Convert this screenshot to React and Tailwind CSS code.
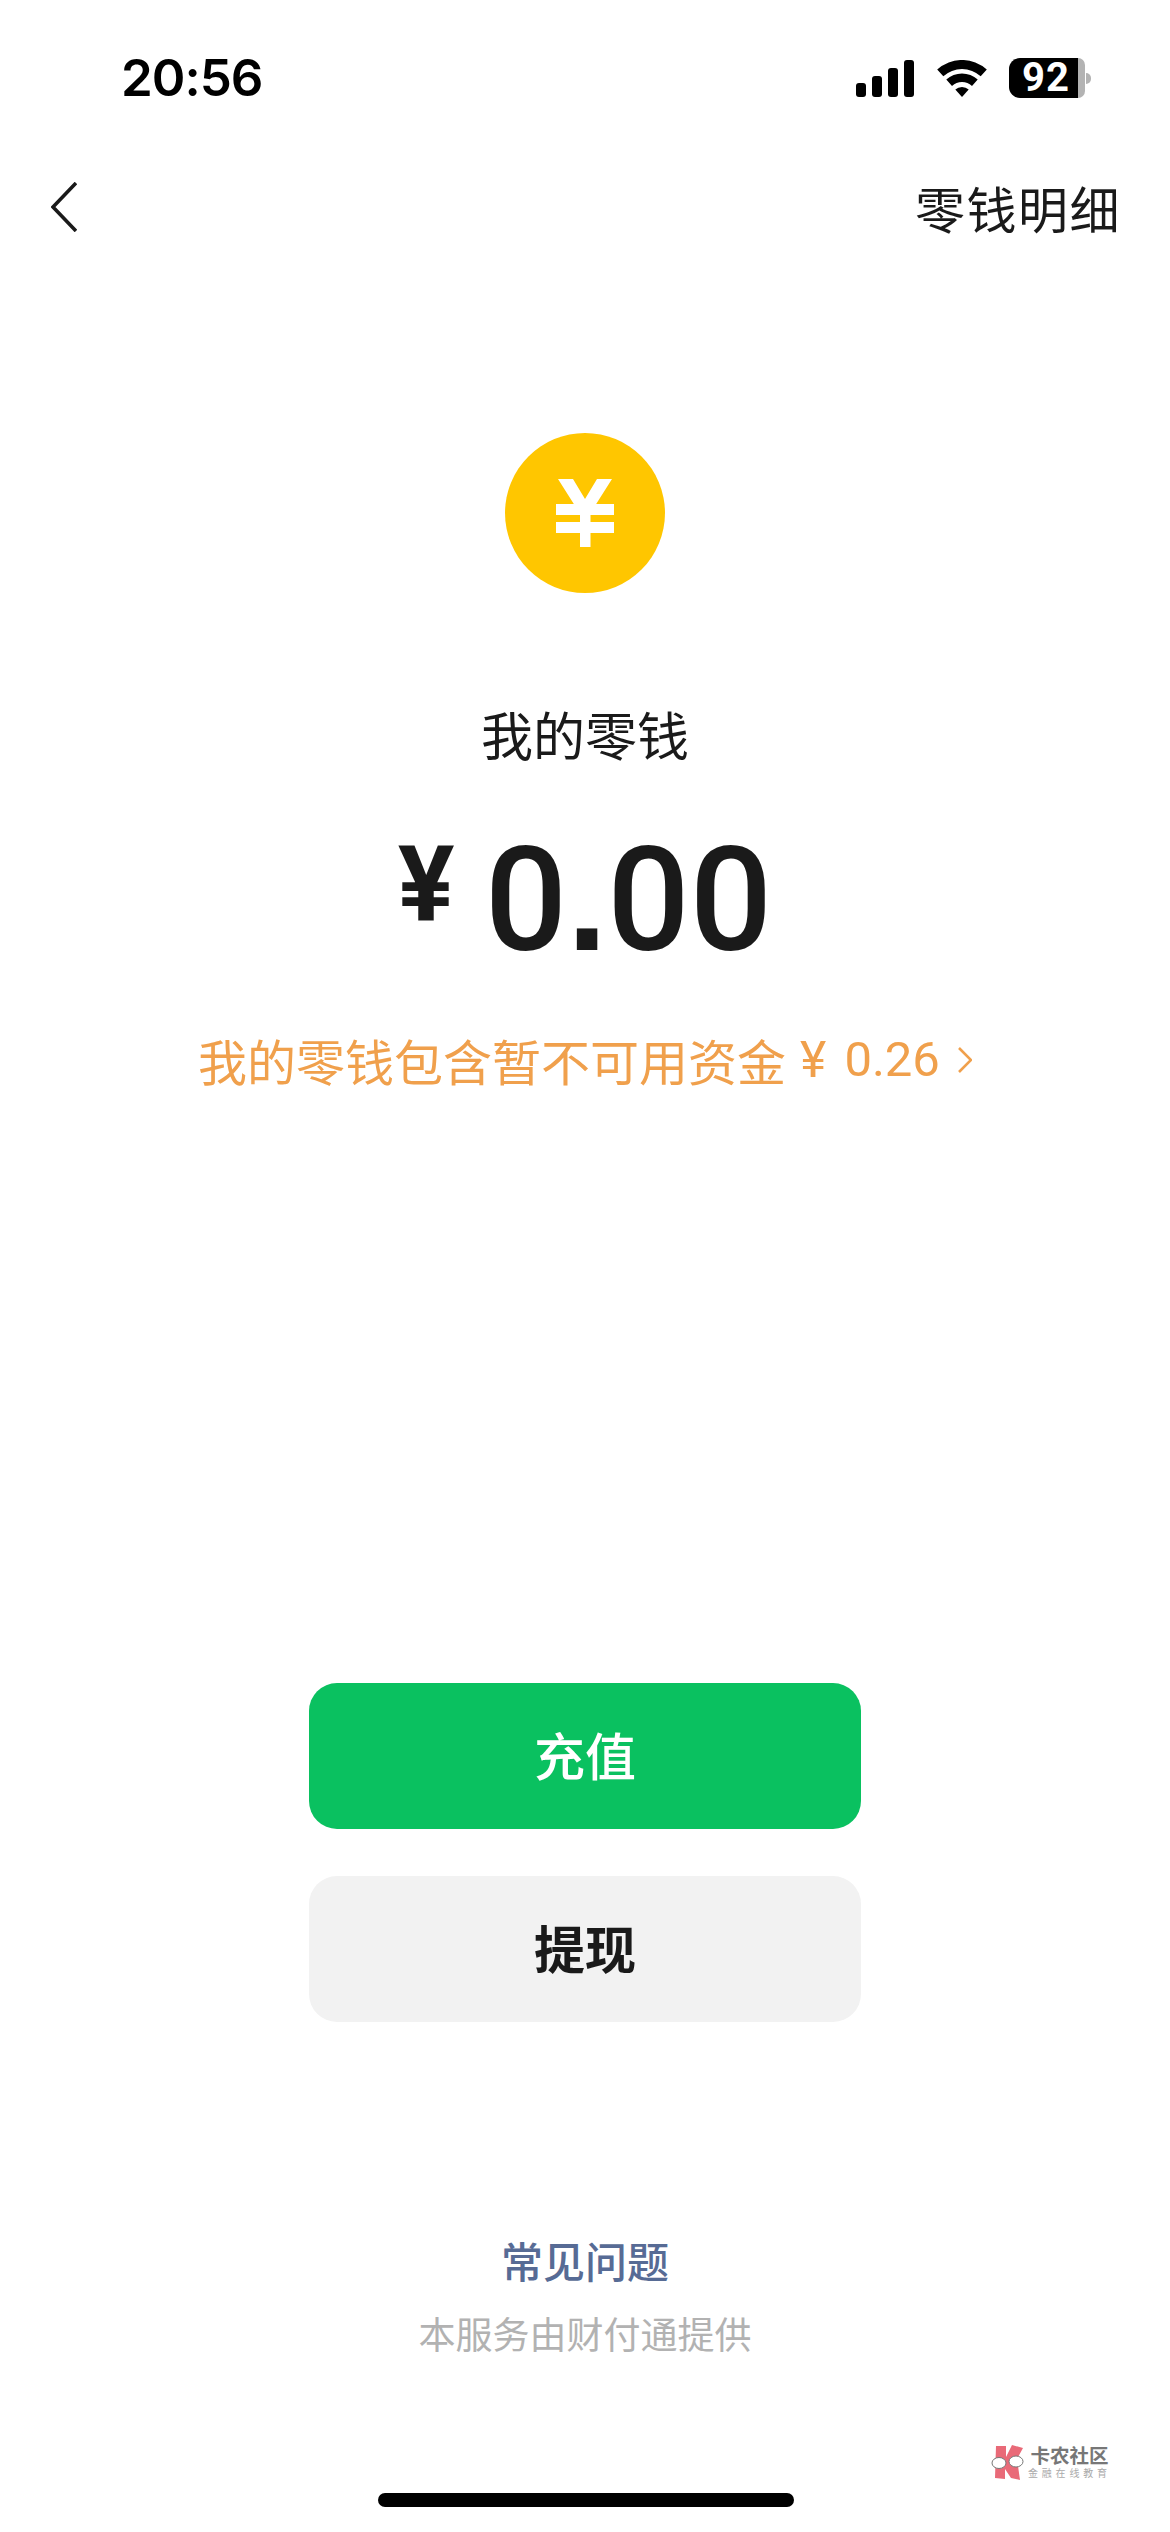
export default function App() {
  return (
    <div className="relative w-[1170px] h-[2532px] bg-white flex flex-col overflow-hidden text-[#1a1a1a] font-['Noto_Sans_CJK_SC',sans-serif]">
      {/* status bar */}
      <div className="flex items-center justify-between h-[40px] mt-[58px] pl-[121px] pr-[79px]">
        <span className="font-['Inter',sans-serif] font-semibold text-[51px] leading-[40px] text-black tracking-[-1px]">20:56</span>
        <div className="flex items-center">
          <svg width="58" height="37" viewBox="0 0 58 37" fill="black">
            <rect x="0" y="23" width="10" height="14" rx="3" />
            <rect x="16" y="16" width="10" height="21" rx="3" />
            <rect x="32" y="8" width="10" height="29" rx="3" />
            <rect x="48" y="0" width="10" height="37" rx="3" />
          </svg>
          <svg className="ml-[23px]" width="50" height="37" viewBox="0 0 50 37" fill="black">
            <path d="M0.2 9.5A37 37 0 0 1 49.8 9.5L43.7 16.2A28 28 0 0 0 6.3 16.2Z" />
            <path d="M9.3 19.5A23.5 23.5 0 0 1 40.7 19.5L35 25.9A15 15 0 0 0 15 25.9Z" />
            <path d="M18.3 29.6A10 10 0 0 1 31.7 29.6L25 37Z" />
          </svg>
          <div className="ml-[22px] flex h-[40px]">
            <div className="w-[69px] h-full rounded-l-[11px] bg-black flex items-center justify-center pl-[5px]">
              <span className="font-['Roboto',sans-serif] font-bold text-[40px] leading-[40px] tracking-[1px] text-white">92</span>
            </div>
            <div className="w-[7px] h-full rounded-r-[11px] bg-[#b3b3b3]" />
          </div>
          <div className="ml-[1px] w-[5px] h-[11px] rounded-r-full bg-[#b3b3b3]" />
        </div>
      </div>

      {/* nav */}
      <div className="flex items-center justify-between h-[50px] mt-[84px] pl-[51px] pr-[49px]">
        <svg width="26" height="50" viewBox="0 0 26 50" fill="none" stroke="#1a1a1a" strokeWidth="3.6">
          <path d="M25 1L2 25L25 49" />
        </svg>
        <span className="text-[50px] leading-[50px] tracking-[1.5px]">零钱明细</span>
      </div>

      {/* coin */}
      <div className="self-center mt-[201px] w-[160px] h-[160px] rounded-full bg-[#FFC600] flex items-center justify-center">
        <svg width="58" height="68" viewBox="0 0 58 68" fill="white">
          <path d="M2 0H17L29 20L41 0H56L37 30H21Z" />
          <rect x="24" y="24" width="10.5" height="44" />
          <rect x="0" y="25" width="58" height="11" />
          <rect x="0" y="43" width="58" height="11" />
        </svg>
      </div>

      <div className="self-center mt-[115px] text-[52px] leading-[52px]">我的零钱</div>

      <div className="self-center flex items-start mt-[82px] h-[116px] font-['Roboto',sans-serif] font-medium">
        <span className="text-[106px] leading-[86px] font-bold">¥</span>
        <span className="ml-[30px] text-[145px] leading-[116px]">
          0<span className="font-['Liberation_Sans',sans-serif] font-bold">.</span>00
        </span>
      </div>

      <div className="self-center flex items-center mt-[76px] h-[52px] text-[#F0A04C]">
        <span className="text-[49px] leading-[52px]">我的零钱包含暂不可用资金</span>
        <span className="ml-[14px] font-['Roboto',sans-serif] text-[50px] leading-[52px]">¥</span>
        <span className="ml-[18px] font-['Roboto',sans-serif] text-[49px] leading-[52px]">0.26</span>
        <svg className="ml-[18px]" width="14" height="26" viewBox="0 0 14 26" fill="none" stroke="#F0A04C" strokeWidth="2.6">
          <path d="M1 1L13 13L1 25" />
        </svg>
      </div>

      {/* buttons */}
      <div className="self-center mt-[597px] w-[552px] h-[146px] rounded-[28px] bg-[#0AC160] text-white flex items-center justify-center pb-[4px] text-[51px] font-medium">充值</div>
      <div className="self-center mt-[47px] w-[552px] h-[146px] rounded-[28px] bg-[#F2F2F2] flex items-center justify-center pb-[4px] text-[51px] font-bold">提现</div>

      {/* footer */}
      <div className="self-center mt-[215px] text-[#576B95] text-[42px] leading-[46px] font-medium">常见问题</div>
      <div className="self-center mt-[30px] text-[#B2B2B2] text-[37px] leading-[40px]">本服务由财付通提供</div>

      {/* watermark */}
      <div className="absolute left-[991px] top-[2445px] flex items-start">
        <svg width="34" height="36" viewBox="0 0 34 36">
          <path d="M5 1H15V12L21 0L32 3L26 14L29 35L20 33L14 24V34L4 33Z" fill="#E96A78" />
          <ellipse cx="8" cy="18" rx="7" ry="5.5" fill="white" stroke="#777" strokeWidth="1" />
          <ellipse cx="25" cy="16.5" rx="7" ry="5.5" fill="white" stroke="#777" strokeWidth="1" />
        </svg>
        <div className="ml-[3px] flex flex-col items-center">
          <span className="text-[#777] text-[19.5px] leading-[20px] font-bold">卡农社区</span>
          <span className="mt-[2px] text-[#AAA] text-[10px] leading-[12px] tracking-[3.8px]">金融在线教育</span>
        </div>
      </div>

      {/* home indicator */}
      <div className="absolute left-[378px] top-[2493px] w-[416px] h-[14px] rounded-full bg-black" />
    </div>
  );
}
